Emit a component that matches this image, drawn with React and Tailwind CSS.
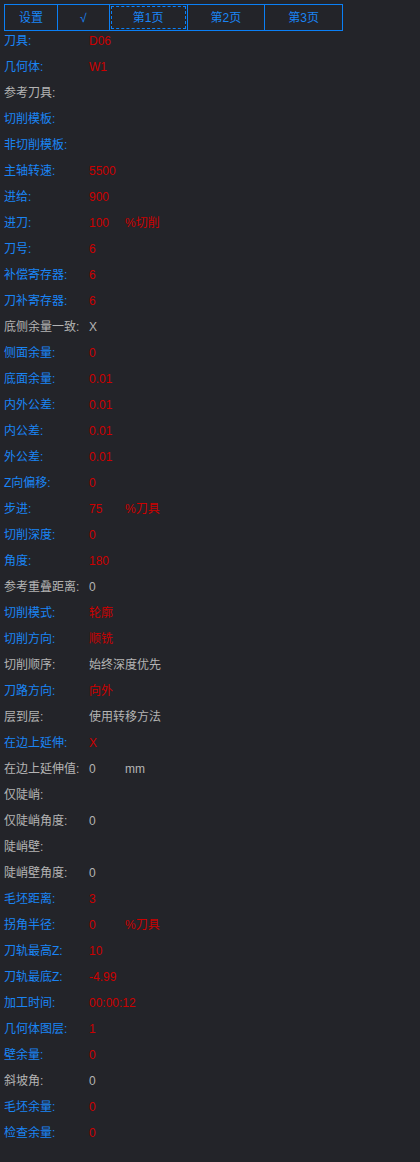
import React from "react";

const BLUE = "b";
const GRAY = "g";

// [label, kind, value, unit]
const rows = [
  ["刀具:", BLUE, "D06"],
  ["几何体:", BLUE, "W1"],
  ["参考刀具:", GRAY, ""],
  ["切削模板:", BLUE, ""],
  ["非切削模板:", BLUE, ""],
  ["主轴转速:", BLUE, "5500"],
  ["进给:", BLUE, "900"],
  ["进刀:", BLUE, "100", "%切削"],
  ["刀号:", BLUE, "6"],
  ["补偿寄存器:", BLUE, "6"],
  ["刀补寄存器:", BLUE, "6"],
  ["底侧余量一致:", GRAY, "X"],
  ["侧面余量:", BLUE, "0"],
  ["底面余量:", BLUE, "0.01"],
  ["内外公差:", BLUE, "0.01"],
  ["内公差:", BLUE, "0.01"],
  ["外公差:", BLUE, "0.01"],
  ["Z向偏移:", BLUE, "0"],
  ["步进:", BLUE, "75", "%刀具"],
  ["切削深度:", BLUE, "0"],
  ["角度:", BLUE, "180"],
  ["参考重叠距离:", GRAY, "0"],
  ["切削模式:", BLUE, "轮廓"],
  ["切削方向:", BLUE, "顺铣"],
  ["切削顺序:", GRAY, "始终深度优先"],
  ["刀路方向:", BLUE, "向外"],
  ["层到层:", GRAY, "使用转移方法"],
  ["在边上延伸:", BLUE, "X"],
  ["在边上延伸值:", GRAY, "0", "mm"],
  ["仅陡峭:", GRAY, ""],
  ["仅陡峭角度:", GRAY, "0"],
  ["陡峭壁:", GRAY, ""],
  ["陡峭壁角度:", GRAY, "0"],
  ["毛坯距离:", BLUE, "3"],
  ["拐角半径:", BLUE, "0", "%刀具"],
  ["刀轨最高Z:", BLUE, "10"],
  ["刀轨最底Z:", BLUE, "-4.99"],
  ["加工时间:", BLUE, "00:00:12"],
  ["几何体图层:", BLUE, "1"],
  ["壁余量:", BLUE, "0"],
  ["斜坡角:", GRAY, "0"],
  ["毛坯余量:", BLUE, "0"],
  ["检查余量:", BLUE, "0"],
];

const tabs = [
  { label: "设置", w: "w-[52px]" },
  { label: "√", w: "w-[52px]" },
  { label: "第1页", w: "w-[78px]", active: true },
  { label: "第2页", w: "w-[78px]" },
  { label: "第3页", w: "w-[78px]" },
];

function Row({ label, kind, value, unit }) {
  const isBlue = kind === BLUE;
  return (
    <div className="flex h-[26px] leading-[18px] text-[12px]">
      <span className={"w-[85px] shrink-0 " + (isBlue ? "text-[#1a84f5]" : "text-[#b4b4b4]")}>
        {label}
      </span>
      <span className={"w-[36px] shrink-0 whitespace-nowrap " + (isBlue ? "text-[#cc0000]" : "text-[#b4b4b4]")}>
        {value}
      </span>
      {unit && (
        <span className={isBlue ? "text-[#cc0000]" : "text-[#b4b4b4]"}>{unit}</span>
      )}
    </div>
  );
}

export default function App() {
  return (
    <div
      className="min-h-[1162px] w-[420px] bg-[#232429] pt-[4px]"
      style={{ fontFamily: '"Liberation Sans", "Noto Sans CJK SC", sans-serif' }}
    >
      <div className="ml-[4px] flex h-[27px] w-[339px] border border-[#0a7ff5]">
        {tabs.map((t, i) => (
          <div
            key={t.label}
            className={
              "flex items-center justify-center text-[12px] text-[#1a84f5] " +
              t.w +
              (i > 0 ? " border-l border-[#0a7ff5]" : "")
            }
          >
            {t.active ? (
              <div className="m-[1px] flex h-[23px] w-[75px] items-center justify-center border border-dashed border-[#0a7ff5]">
                {t.label}
              </div>
            ) : (
              t.label
            )}
          </div>
        ))}
      </div>
      <div className="px-[4px] pt-[1px]">
        {rows.map(([label, kind, value, unit]) => (
          <Row key={label} label={label} kind={kind} value={value} unit={unit} />
        ))}
      </div>
    </div>
  );
}
